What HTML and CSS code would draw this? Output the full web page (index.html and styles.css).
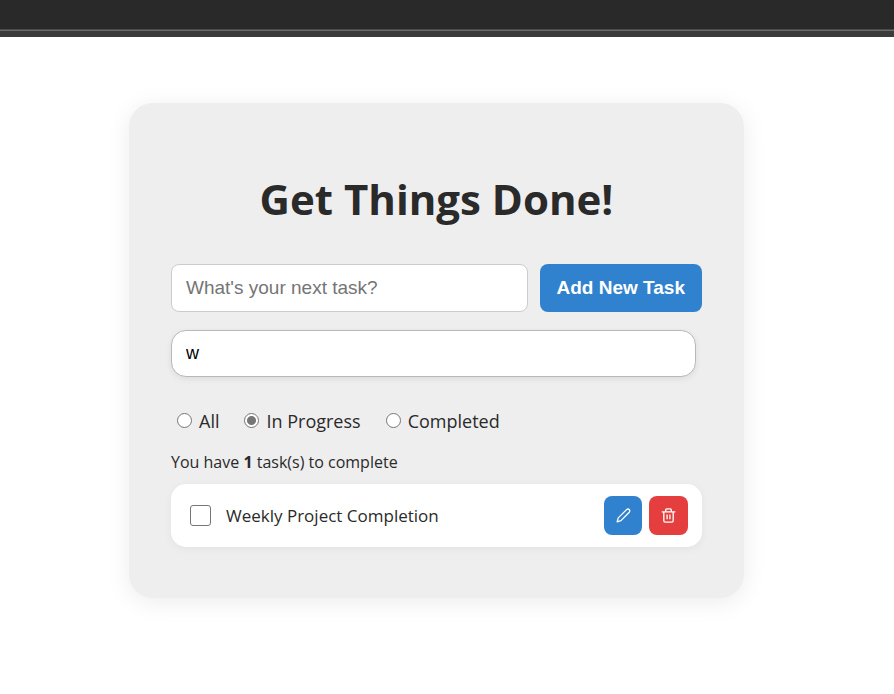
FILE: index.html
```html
<!DOCTYPE html>
<html lang="en">
<head>
<meta charset="utf-8">
<meta name="viewport" content="width=device-width, initial-scale=1">
<title>Get Things Done!</title>
<link rel="stylesheet" href="styles.css">
</head>
<body>
<div class="topbar"></div>
<main class="page">
  <section class="card">
    <h1 class="title">Get Things Done!</h1>
    <form class="add-form">
      <input class="field" type="text" placeholder="What's your next task?" aria-label="New task">
      <button class="add-button" type="button">Add New Task</button>
    </form>
    <input class="field search" type="text" value="w" aria-label="Search tasks">
    <div class="filters" role="radiogroup" aria-label="Filter tasks">
      <label class="filter"><input type="radio" name="filter">All</label>
      <label class="filter"><input type="radio" name="filter" checked>In Progress</label>
      <label class="filter"><input type="radio" name="filter">Completed</label>
    </div>
    <p class="summary">You have <strong>1</strong> task(s) to complete</p>
    <ul class="tasks">
      <li class="task">
        <label class="task-label"><input type="checkbox">Weekly Project Completion</label>
        <button class="icon-button edit" type="button" aria-label="Edit task">
          <svg viewBox="0 0 16 16" fill="none" stroke="currentColor" stroke-linejoin="round"><path d="M1.200 14.800l1.200-4.300L11.300 1.700q1.500-1.200 2.800 0 1.200 1.300 0 2.800L5.300 13.500z"/></svg>
        </button>
        <button class="icon-button delete" type="button" aria-label="Delete task">
          <svg viewBox="0 0 16 16" fill="none" stroke="currentColor" stroke-linejoin="round"><path d="M.8 4.200h14.400M5 4V2q0-1 1-1h4q1 0 1 1v2M3 4.500v9q0 1.500 1.500 1.500h7q1.500 0 1.500-1.500v-9M6.500 7v5M9.500 7v5"/></svg>
        </button>
      </li>
    </ul>
  </section>
</main>
</body>
</html>
```
FILE: styles.css
```css
* {
  box-sizing: border-box;
}

body {
  margin: 0;
  background: #fff;
  color: #2a2a2a;
  font-family: "Segoe UI", "Open Sans", "Noto Sans", sans-serif;
}

.topbar {
  height: 37px;
  background: linear-gradient(#292929 29px, #4a4a4a 29px, #4a4a4a 30px, #6a6a6a 30px, #6a6a6a 31px, #3b3b3b 31px);
}

.page {
  padding: 66px 36px 66px 15px;
}

.card {
  max-width: 615px;
  margin: 0 auto;
  padding: 66px 42px 51px;
  background: #eee;
  border-radius: 24px;
  box-shadow: 0 4px 24px rgba(0, 0, 0, 0.08);
}

.title {
  margin: 0 0 35px;
  font-size: 42px;
  line-height: 60px;
  text-align: center;
}

.add-form {
  display: flex;
  gap: 12px;
  margin-bottom: 18px;
}

.field {
  display: block;
  flex: 1;
  min-width: 0;
  height: 48px;
  padding: 0 14px;
  border: 1px solid #ccc;
  border-radius: 8px;
  background: #fff;
  color: #000;
  font: 19px "Liberation Sans", Arial, sans-serif;
}

.field::placeholder {
  color: #757575;
}

.add-button {
  padding: 0 17px;
  border: 0;
  border-radius: 8px;
  background: #3182ce;
  color: #fff;
  font: bold 19px "Liberation Sans", Arial, sans-serif;
}

.search {
  width: calc(100% - 6px);
  height: 47px;
  border-color: #b8b8b8;
  border-radius: 15px;
  box-shadow: 0 2px 6px rgba(0, 0, 0, 0.08);
  font-size: 18px;
}

.filters {
  display: flex;
  gap: 25px;
  margin-top: 30px;
  padding-left: 6px;
  font-size: 18px;
  line-height: 28px;
}

.filter {
  display: flex;
  align-items: center;
  gap: 7px;
}

.filter input {
  appearance: none;
  width: 15px;
  height: 15px;
  margin: 0 0 2px;
  border: 1px solid #767676;
  border-radius: 50%;
  background: #fff;
}

.filter input:checked {
  background: radial-gradient(circle, #767676 4px, #fff 5px);
}

.summary {
  margin: 15px 0 10px;
  font-size: 16px;
  line-height: 24px;
}

.tasks {
  margin: 0;
  padding: 0;
  list-style: none;
}

.task {
  display: flex;
  align-items: center;
  gap: 7px;
  padding: 12px 14px 12px 19px;
  border-radius: 15px;
  background: #fff;
  box-shadow: 0 2px 8px rgba(0, 0, 0, 0.05);
}

.task-label {
  display: flex;
  flex: 1;
  align-items: center;
  gap: 15px;
  font-size: 17px;
}

.task-label input {
  appearance: none;
  width: 21px;
  height: 21px;
  margin: 0;
  border: 1px solid #767676;
  border-radius: 3px;
  background: #fff;
}

.icon-button {
  display: grid;
  place-items: center;
  width: 39px;
  height: 39px;
  padding: 0;
  border: 0;
  border-radius: 8px;
  color: #fff;
}

.icon-button svg {
  width: 15px;
  height: 15px;
  stroke-width: 1.4;
}

.edit {
  width: 38px;
  background: #3182ce;
}

.delete {
  background: #e53e3e;
}
```
